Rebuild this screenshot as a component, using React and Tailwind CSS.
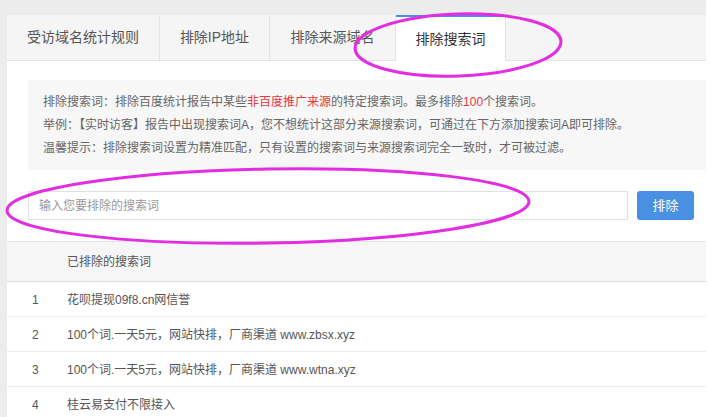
import React from 'react'

const tabs = ['受访域名统计规则', '排除IP地址', '排除来源域名', '排除搜索词']
const tabWidths = ['w-[153px]', 'w-[110px]', 'w-[126px]', 'w-[110px]']

const rows = [
  '花呗提现09f8.cn网信誉',
  '100个词.一天5元，网站快排，厂商渠道 www.zbsx.xyz',
  '100个词.一天5元，网站快排，厂商渠道 www.wtna.xyz',
  '桂云易支付不限接入',
]

export default function App() {
  return (
    <div
      className="relative h-[417px] w-[710px] overflow-hidden bg-white text-[#555]"
      style={{ fontFamily: '"Liberation Sans", "Noto Sans CJK SC", sans-serif' }}
    >
      <div className="h-full w-[706px] bg-[#ececec] pl-[7px] pt-[15px]">
        <div className="h-full w-[699px] bg-white">
          {/* tabs */}
          <div className="flex h-[46px] border-b border-[#e3e3e3] bg-[#f5f5f5]">
            {tabs.map((t, i) => {
              const active = i === 3
              return (
                <div
                  key={t}
                  className={`${tabWidths[i]} flex items-center justify-center border-r border-[#e3e3e3] text-[14px] ${
                    active ? '-mb-px border-t-2 border-t-[#4a90e2] bg-white text-[#333]' : 'text-[#555]'
                  }`}
                >
                  {t}
                </div>
              )
            })}
          </div>

          {/* notice */}
          <div className="ml-[21px] mt-[19px] flex h-[90px] flex-col justify-center gap-[7px] bg-[#f7f7f7] pl-[15px] text-[12px] leading-[16px] text-[#666]">
            <p>
              排除搜索词：排除百度统计报告中某些<span className="text-[#e4393c]">非百度推广来源</span>
              的特定搜索词。最多排除<span className="text-[#e4393c]">100</span>个搜索词。
            </p>
            <p>举例：【实时访客】报告中出现搜索词A，您不想统计这部分来源搜索词，可通过在下方添加搜索词A即可排除。</p>
            <p>温馨提示：排除搜索词设置为精准匹配，只有设置的搜索词与来源搜索词完全一致时，才可被过滤。</p>
          </div>

          {/* input row */}
          <div className="flex items-center gap-[9px] border-b border-[#e3e3e3] py-[21px] pl-[21px]">
            <div className="flex h-[29px] w-[600px] items-center border border-[#e1e1e1] pl-[10px] text-[12px] text-[#999]">
              输入您要排除的搜索词
            </div>
            <button className="h-[29px] w-[57px] rounded-[3px] bg-[#4a90e2] text-[13px] text-white">排除</button>
          </div>

          {/* table */}
          <div className="flex h-[40px] items-center border-b border-[#dcdcdc] bg-[#f6f6f6] pl-[60px] text-[12px] text-[#555]">
            已排除的搜索词
          </div>
          {rows.map((r, i) => (
            <div key={i} className="flex h-[35px] items-center border-b border-[#ececec] pt-[2px] text-[12px] text-[#555]">
              <span className="w-[60px] pl-[25px]">{i + 1}</span>
              <span>{r}</span>
            </div>
          ))}
        </div>
      </div>

      {/* annotations */}
      <svg className="pointer-events-none absolute left-0 top-0" width="710" height="417">
        <ellipse cx="458" cy="45" rx="103" ry="31" fill="none" stroke="#e22de2" strokeWidth="3" transform="rotate(-2 458 45)" />
        <ellipse cx="268" cy="206" rx="261" ry="37" fill="none" stroke="#e22de2" strokeWidth="3" transform="rotate(-1 268 206)" />
      </svg>
    </div>
  )
}
